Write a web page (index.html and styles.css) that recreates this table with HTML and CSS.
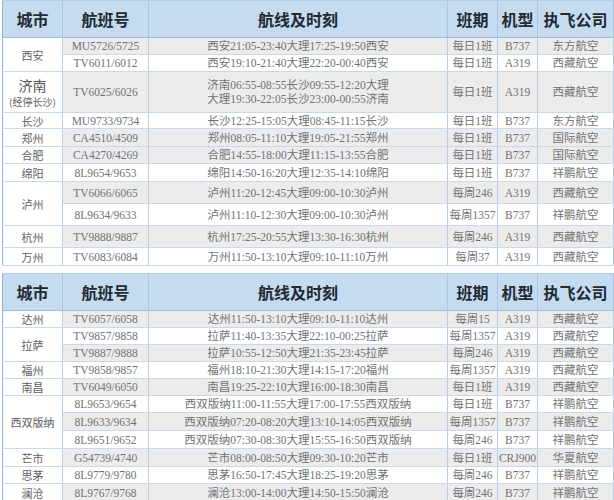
FILE: index.html
```html
<!DOCTYPE html>
<html lang="zh-CN">
<head>
<meta charset="utf-8">
<title>航班时刻表</title>
<link rel="stylesheet" href="styles.css">
</head>
<body>
<div class="page">
  <table class="sched">
    <colgroup>
      <col class="c-city"><col class="c-no"><col class="c-route"><col class="c-days"><col class="c-type"><col class="c-air">
    </colgroup>
    <thead>
      <tr class="head"><th>城市</th><th>航班号</th><th>航线及时刻</th><th>班期</th><th>机型</th><th>执飞公司</th></tr>
    </thead>
    <tbody>
      <tr class="g h17"><td class="city" rowspan="2">西安</td><td>MU5726/5725</td><td>西安21:05-23:40大理17:25-19:50西安</td><td>每日1班</td><td>B737</td><td>东方航空</td></tr>
      <tr class="in h17"><td>TV6011/6012</td><td>西安19:10-21:40大理22:20-00:40西安</td><td>每日1班</td><td>A319</td><td>西藏航空</td></tr>
      <tr class="g h41"><td class="city"><span class="big">济南</span><br><span class="note">(经停长沙)</span></td><td>TV6025/6026</td><td>济南06:55-08:55长沙09:55-12:20大理<br>大理19:30-22:05长沙23:00-00:55济南</td><td>每日1班</td><td>A319</td><td>西藏航空</td></tr>
      <tr class="h16"><td class="city">长沙</td><td>MU9733/9734</td><td>长沙12:25-15:05大理08:45-11:15长沙</td><td>每日1班</td><td>B737</td><td>东方航空</td></tr>
      <tr class="g h18"><td class="city">郑州</td><td>CA4510/4509</td><td>郑州08:05-11:10大理19:05-21:55郑州</td><td>每日1班</td><td>B737</td><td>国际航空</td></tr>
      <tr class="g h17"><td class="city">合肥</td><td>CA4270/4269</td><td>合肥14:55-18:00大理11:15-13:55合肥</td><td>每日1班</td><td>B737</td><td>国际航空</td></tr>
      <tr class="h18"><td class="city">绵阳</td><td>8L9654/9653</td><td>绵阳14:50-16:20大理12:35-14:10绵阳</td><td>每日1班</td><td>B737</td><td>祥鹏航空</td></tr>
      <tr class="g h22"><td class="city" rowspan="2">泸州</td><td>TV6066/6065</td><td>泸州11:20-12:45大理09:00-10:30泸州</td><td>每周246</td><td>A319</td><td>西藏航空</td></tr>
      <tr class="in h22"><td>8L9634/9633</td><td>泸州11:10-12:30大理09:00-10:30泸州</td><td>每周1357</td><td>B737</td><td>祥鹏航空</td></tr>
      <tr class="g h22"><td class="city">杭州</td><td>TV9888/9887</td><td>杭州17:25-20:55大理13:30-16:30杭州</td><td>每周246</td><td>A319</td><td>西藏航空</td></tr>
      <tr class="h18"><td class="city">万州</td><td>TV6083/6084</td><td>万州11:50-13:10大理09:10-11:10万州</td><td>每周37</td><td>A319</td><td>西藏航空</td></tr>
    </tbody>
  </table>

  <table class="sched second">
    <colgroup>
      <col class="c-city"><col class="c-no"><col class="c-route"><col class="c-days"><col class="c-type"><col class="c-air">
    </colgroup>
    <thead>
      <tr class="head"><th>城市</th><th>航班号</th><th>航线及时刻</th><th>班期</th><th>机型</th><th>执飞公司</th></tr>
    </thead>
    <tbody>
      <tr class="g h17"><td class="city">达州</td><td>TV6057/6058</td><td>达州11:50-13:10大理09:10-11:10达州</td><td>每周15</td><td>A319</td><td>西藏航空</td></tr>
      <tr class="h17"><td class="city" rowspan="2">拉萨</td><td>TV9857/9858</td><td>拉萨11:40-13:35大理22:10-00:25拉萨</td><td>每周1357</td><td>A319</td><td>西藏航空</td></tr>
      <tr class="g in h17"><td>TV9887/9888</td><td>拉萨10:55-12:50大理21:35-23:45拉萨</td><td>每周246</td><td>A319</td><td>西藏航空</td></tr>
      <tr class="h17"><td class="city">福州</td><td>TV9858/9857</td><td>福州18:10-21:30大理14:15-17:20福州</td><td>每周1357</td><td>A319</td><td>西藏航空</td></tr>
      <tr class="g h17"><td class="city">南昌</td><td>TV6049/6050</td><td>南昌19:25-22:10大理16:00-18:30南昌</td><td>每日1班</td><td>A319</td><td>西藏航空</td></tr>
      <tr class="h17"><td class="city" rowspan="3">西双版纳</td><td>8L9653/9654</td><td>西双版纳11:00-11:55大理17:00-17:55西双版纳</td><td>每日1班</td><td>B737</td><td>祥鹏航空</td></tr>
      <tr class="g in h18"><td>8L9633/9634</td><td>西双版纳07:20-08:20大理13:10-14:05西双版纳</td><td>每周1357</td><td>B737</td><td>祥鹏航空</td></tr>
      <tr class="in h18"><td>8L9651/9652</td><td>西双版纳07:30-08:30大理15:55-16:50西双版纳</td><td>每周246</td><td>B737</td><td>祥鹏航空</td></tr>
      <tr class="g h18"><td class="city">芒市</td><td>G54739/4740</td><td>芒市08:00-08:50大理09:30-10:20芒市</td><td>每日1班</td><td>CRJ900</td><td>华夏航空</td></tr>
      <tr class="h17"><td class="city">思茅</td><td>8L9779/9780</td><td>思茅16:50-17:45大理18:25-19:20思茅</td><td>每周246</td><td>B737</td><td>祥鹏航空</td></tr>
      <tr class="g h18"><td class="city">澜沧</td><td>8L9767/9768</td><td>澜沧13:00-14:00大理14:50-15:50澜沧</td><td>每周246</td><td>B737</td><td>祥鹏航空</td></tr>
    </tbody>
  </table>
</div>
</body>
</html>
```
FILE: styles.css
```css
html, body {
  margin: 0;
  padding: 0;
  background: #ffffff;
}

.page {
  padding: 0 1px 0 2px;
  display: flex;
  flex-direction: column;
  gap: 7px;
}

.sched {
  border-collapse: collapse;
  table-layout: fixed;
  width: 611px;
  font-family: "Liberation Serif", "Noto Sans CJK SC", serif;
  font-size: 11.5px;
  color: #727272;
}

.c-city { width: 60px; }
.c-no { width: 86px; }
.c-route { width: 299px; }
.c-days { width: 50px; }
.c-type { width: 40px; }
.c-air { width: 76px; }

.sched th {
  height: 36px;
  padding: 0;
  background: #c5dbf0;
  color: #222a33;
  font-family: "Noto Sans CJK SC", sans-serif;
  font-size: 16px;
  font-weight: 700;
  text-align: center;
  border-left: 1px solid #a9c7e4;
  border-right: 1px solid #a9c7e4;
  border-top: 1px solid #b3cde6;
  border-bottom: 1px solid #9bbde0;
}

.sched th:first-child {
  border-left-color: #8fb3d9;
}

.sched td {
  padding: 0;
  text-align: center;
  vertical-align: middle;
  line-height: 14px;
  white-space: nowrap;
  border-left: 1px solid #b3cfea;
  border-right: 1px solid #b3cfea;
  border-top: 1px solid #c9d9ea;
  border-bottom: 1px solid #c9d9ea;
}

.sched td:first-child {
  border-left-color: #8fb3d9;
}

.sched tr.in td {
  border-top-color: #e6e9ec;
}

.sched tr.g td {
  background: #ececec;
}

.sched td.city,
.sched tr.g td.city {
  background: #ffffff;
  color: #5e5e5e;
  font-family: "Noto Sans CJK SC", sans-serif;
  font-size: 11px;
}

.city .big {
  font-size: 14px;
  line-height: 17px;
  color: #555555;
}

.city .note {
  font-size: 10px;
  line-height: 13px;
}

.h16 { height: 16px; }
.h17 { height: 17px; }
.h18 { height: 18px; }
.h22 { height: 22px; }
.h41 { height: 41px; }
```
